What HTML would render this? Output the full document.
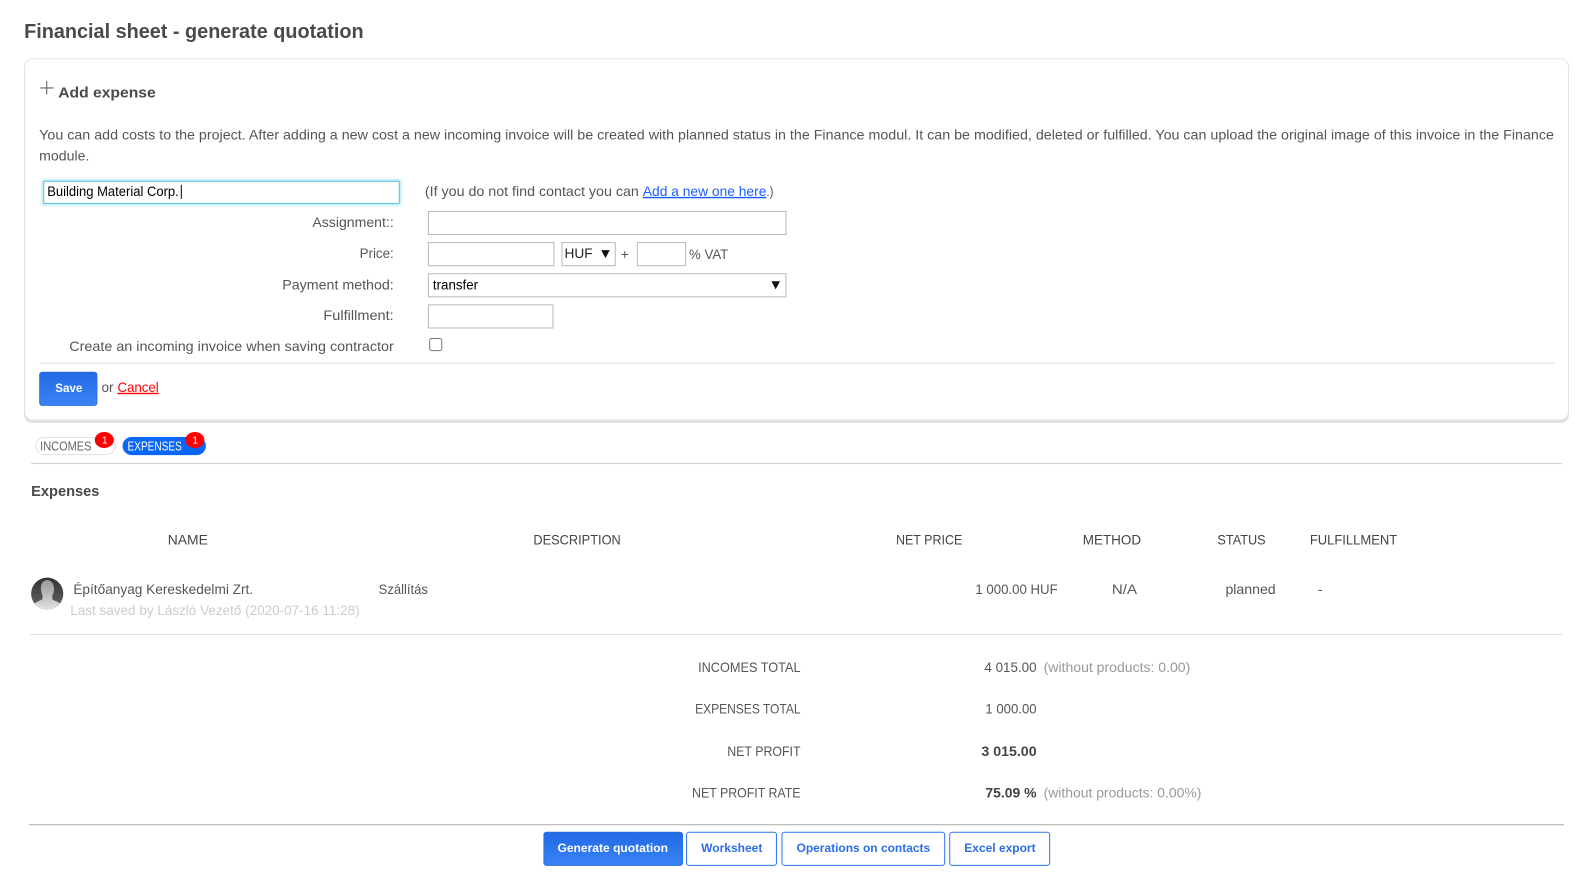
<!DOCTYPE html>
<html lang="en"><head><meta charset="utf-8"><title>Financial sheet - generate quotation</title>
<style>
html,body{margin:0;padding:0;background:#fff;width:1575px;height:881px;overflow:hidden}
svg{display:block}
text{font-family:"Liberation Sans",Arial,sans-serif;font-size:14px;fill:#555;white-space:pre}
.b{font-weight:700}
.h{fill:#444}
.g{fill:#999}
.k{fill:#000;font-size:13.4px}
.bt{font-weight:700;font-size:12px;fill:#2b6fe8}
.w{fill:#fff}
</style></head><body>
<svg width="1575" height="881" viewBox="0 0 1568 877" preserveAspectRatio="none" xmlns="http://www.w3.org/2000/svg">
<defs>
<linearGradient id="bl" x1="0" y1="0" x2="0" y2="1"><stop offset="0" stop-color="#2269e6"/><stop offset="1" stop-color="#3a83f5"/></linearGradient>
<linearGradient id="av" x1="0" y1="0" x2="0" y2="1"><stop offset="0" stop-color="#333"/><stop offset="1" stop-color="#666"/></linearGradient>
<linearGradient id="sil" x1="0" y1="0" x2="0" y2="1"><stop offset="0" stop-color="#999"/><stop offset="1" stop-color="#e4e4e4"/></linearGradient>
<clipPath id="cc"><circle cx="47" cy="591" r="16"/></clipPath>
<filter id="gl" x="-5%" y="-40%" width="110%" height="180%"><feGaussianBlur stdDeviation="1.5"/></filter>
</defs>
<rect width="1568" height="877" fill="#fff"/>
<text x="24" y="38" class="b" style="font-size:20px;fill:#4a4a4a" textLength="338" lengthAdjust="spacingAndGlyphs">Financial sheet - generate quotation</text>

<!-- card -->
<rect x="24" y="60" width="1538" height="361" rx="8" fill="#e0e1e2"/>
<rect x="24.5" y="58.5" width="1537" height="359.5" rx="8" fill="#fff" stroke="#e2e2e2"/>

<path d="M46.5 80.5V94M40 87.5H53.5" stroke="#666" stroke-width="1.1" fill="none"/>
<text x="58" y="97" class="b" style="font-size:15px;fill:#4a4a4a" textLength="97" lengthAdjust="spacingAndGlyphs">Add expense</text>
<text x="39" y="139" textLength="1508" lengthAdjust="spacingAndGlyphs">You can add costs to the project. After adding a new cost a new incoming invoice will be created with planned status in the Finance modul. It can be modified, deleted or fulfilled. You can upload the original image of this invoice in the Finance</text>
<text x="39" y="160" textLength="50" lengthAdjust="spacingAndGlyphs">module.</text>

<rect x="42" y="179" width="357" height="25" fill="#5bc8ea" opacity=".55" filter="url(#gl)"/>
<rect x="43.5" y="180.5" width="354" height="22" fill="#fff" stroke="#5bc4e6"/>
<text x="47" y="195" class="k" textLength="131" lengthAdjust="spacingAndGlyphs">Building Material Corp.</text>
<rect x="180" y="184" width="1" height="14" fill="#000"/>
<text x="423" y="195" textLength="213" lengthAdjust="spacingAndGlyphs">(If you do not find contact you can</text>
<text x="640" y="195" style="fill:#1a5fff;text-decoration:underline" textLength="123" lengthAdjust="spacingAndGlyphs">Add a new one here</text>
<text x="763" y="195" textLength="7" lengthAdjust="spacingAndGlyphs">.)</text>

<text x="311" y="226" textLength="81" lengthAdjust="spacingAndGlyphs">Assignment::</text>
<text x="358" y="257" textLength="34" lengthAdjust="spacingAndGlyphs">Price:</text>
<text x="281" y="288" textLength="111" lengthAdjust="spacingAndGlyphs">Payment method:</text>
<text x="322" y="318.5" textLength="70" lengthAdjust="spacingAndGlyphs">Fulfillment:</text>
<text x="69" y="349.5" textLength="323" lengthAdjust="spacingAndGlyphs">Create an incoming invoice when saving contractor</text>

<g fill="#fff" stroke="#b8b8b8">
<rect x="426.5" y="210.5" width="356" height="23"/>
<rect x="426.5" y="241.5" width="125" height="23"/>
<rect x="559.5" y="241.5" width="53" height="23"/>
<rect x="634.5" y="241.5" width="48" height="23"/>
<rect x="426.5" y="272.5" width="356" height="23"/>
<rect x="426.5" y="303.5" width="124" height="23"/>
</g>
<text x="562" y="257" class="k" style="font-size:14px;fill:#222" textLength="28" lengthAdjust="spacingAndGlyphs">HUF</text>
<path d="M598.5 249H607L602.8 257Z" fill="#111"/>
<text x="618" y="258" textLength="8" lengthAdjust="spacingAndGlyphs">+</text>
<text x="686" y="258" textLength="39" lengthAdjust="spacingAndGlyphs">% VAT</text>
<text x="431" y="288" class="k" textLength="45" lengthAdjust="spacingAndGlyphs">transfer</text>
<path d="M768 280H776.5L772.2 288Z" fill="#111"/>
<rect x="427.8" y="337" width="12" height="12" rx="2" fill="#fff" stroke="#767676"/>
<rect x="39" y="361" width="1508" height="1" fill="#ddd"/>

<rect x="39.5" y="370.5" width="57" height="33" rx="2.5" fill="url(#bl)" stroke="#2a6fe0"/>
<text x="55" y="390" class="bt w" style="fill:#fff" textLength="27" lengthAdjust="spacingAndGlyphs">Save</text>
<text x="101" y="390" textLength="12" lengthAdjust="spacingAndGlyphs">or</text>
<text x="117" y="390" style="fill:#f00;text-decoration:underline" textLength="41" lengthAdjust="spacingAndGlyphs">Cancel</text>

<!-- pills -->
<rect x="35.5" y="435.5" width="79" height="17" rx="8.5" fill="#fff" stroke="#e2e2e2"/>
<text x="40" y="448.5" style="font-size:12.5px;fill:#666" textLength="51" lengthAdjust="spacingAndGlyphs">INCOMES</text>
<ellipse cx="103.8" cy="438" rx="9.5" ry="8" fill="#f00"/>
<text x="101.5" y="441.5" style="font-size:10px;fill:#fff">1</text>
<rect x="122" y="435" width="83" height="18" rx="9" fill="#0a66f5"/>
<text x="127" y="448.5" style="font-size:12.5px;fill:#fff" textLength="54" lengthAdjust="spacingAndGlyphs">EXPENSES</text>
<ellipse cx="194" cy="438" rx="9.5" ry="8" fill="#f00"/>
<text x="191.5" y="441.5" style="font-size:10px;fill:#fff">1</text>
<rect x="31" y="461" width="1524" height="1" fill="#ccc"/>

<text x="31" y="494" class="b" style="font-size:15px;fill:#4a4a4a" textLength="68" lengthAdjust="spacingAndGlyphs">Expenses</text>

<g class="th">
<text x="167" y="542" class="h" textLength="40" lengthAdjust="spacingAndGlyphs">NAME</text>
<text x="531" y="542" class="h" textLength="87" lengthAdjust="spacingAndGlyphs">DESCRIPTION</text>
<text x="892" y="542" class="h" textLength="66" lengthAdjust="spacingAndGlyphs">NET PRICE</text>
<text x="1078" y="542" class="h" textLength="58" lengthAdjust="spacingAndGlyphs">METHOD</text>
<text x="1212" y="542" class="h" textLength="48" lengthAdjust="spacingAndGlyphs">STATUS</text>
<text x="1304" y="542" class="h" textLength="87" lengthAdjust="spacingAndGlyphs">FULFILLMENT</text>
</g>

<circle cx="47" cy="591" r="16" fill="url(#av)"/>
<g clip-path="url(#cc)">
<path d="M31 608C31 601 37 599 41.5 597C43 595 42.5 592.5 41.5 590.5C40 586 40 578 47 577.5C54 578 54.5 586 53 590.5C52 592.5 51.5 595 52.5 597C57 599 63 601 64 608Z" fill="url(#sil)"/>
</g>
<text x="73" y="591.5" textLength="179" lengthAdjust="spacingAndGlyphs">Építőanyag Kereskedelmi Zrt.</text>
<text x="70" y="612" style="fill:#ccc" textLength="288" lengthAdjust="spacingAndGlyphs">Last saved by László Vezető (2020-07-16 11:28)</text>
<text x="377" y="591.5" textLength="49" lengthAdjust="spacingAndGlyphs">Szállítás</text>
<text x="971" y="591.5" textLength="82" lengthAdjust="spacingAndGlyphs">1 000.00 HUF</text>
<text x="1107" y="591.5" textLength="25" lengthAdjust="spacingAndGlyphs">N/A</text>
<text x="1220" y="591.5" textLength="50" lengthAdjust="spacingAndGlyphs">planned</text>
<text x="1312" y="591.5">-</text>
<rect x="30" y="631" width="1525" height="1" fill="#ddd"/>

<text x="695" y="669" textLength="102" lengthAdjust="spacingAndGlyphs">INCOMES TOTAL</text>
<text x="980" y="669" textLength="52" lengthAdjust="spacingAndGlyphs">4 015.00</text>
<text x="1039" y="669" class="g" textLength="146" lengthAdjust="spacingAndGlyphs">(without products: 0.00)</text>
<text x="692" y="710.5" textLength="105" lengthAdjust="spacingAndGlyphs">EXPENSES TOTAL</text>
<text x="981" y="710.5" textLength="51" lengthAdjust="spacingAndGlyphs">1 000.00</text>
<text x="724" y="752.5" textLength="73" lengthAdjust="spacingAndGlyphs">NET PROFIT</text>
<text x="977" y="752.5" class="b" style="fill:#444" textLength="55" lengthAdjust="spacingAndGlyphs">3 015.00</text>
<text x="689" y="794" textLength="108" lengthAdjust="spacingAndGlyphs">NET PROFIT RATE</text>
<text x="981" y="794" class="b" style="fill:#444" textLength="51" lengthAdjust="spacingAndGlyphs">75.09 %</text>
<text x="1039" y="794" class="g" textLength="157" lengthAdjust="spacingAndGlyphs">(without products: 0.00%)</text>

<rect x="29" y="820.5" width="1528" height="1" fill="#aaa"/>
<rect x="541.5" y="828.5" width="138" height="33" rx="2.5" fill="url(#bl)" stroke="#2a6fe0"/>
<text x="555" y="848" class="bt" style="fill:#fff" textLength="110" lengthAdjust="spacingAndGlyphs">Generate quotation</text>
<rect x="683.5" y="828.5" width="89.5" height="33" rx="2.5" fill="#fff" stroke="#2b74ee"/>
<text x="698" y="848" class="bt" textLength="61" lengthAdjust="spacingAndGlyphs">Worksheet</text>
<rect x="778.5" y="828.5" width="162" height="33" rx="2.5" fill="#fff" stroke="#2b74ee"/>
<text x="793" y="848" class="bt" textLength="133" lengthAdjust="spacingAndGlyphs">Operations on contacts</text>
<rect x="945.5" y="828.5" width="99.5" height="33" rx="2.5" fill="#fff" stroke="#2b74ee"/>
<text x="960" y="848" class="bt" textLength="71" lengthAdjust="spacingAndGlyphs">Excel export</text>
</svg>
</body></html>
